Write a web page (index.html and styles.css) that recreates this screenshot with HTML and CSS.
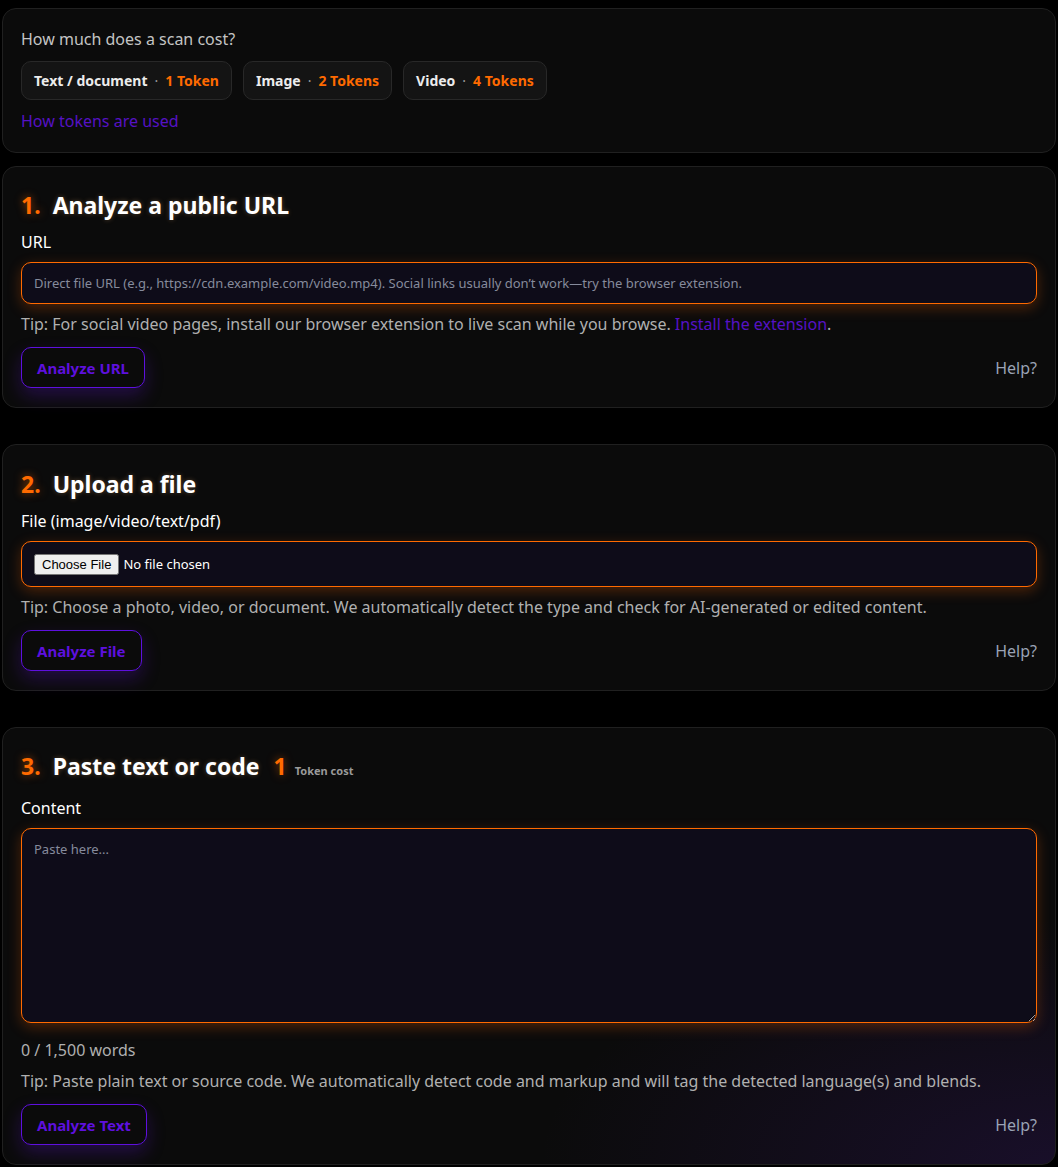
FILE: index.html
```html
<!DOCTYPE html>
<html lang="en">
<head>
<meta charset="utf-8">
<title>Scan</title>
<link rel="stylesheet" href="styles.css">
</head>
<body>
<main class="page">
  <section class="card card-cost">
    <p class="cost-title">How much does a scan cost?</p>
    <div class="chips">
      <span class="chip"><span class="chip-name">Text / document</span><span class="chip-dot">·</span><span class="chip-val">1 Token</span></span>
      <span class="chip"><span class="chip-name">Image</span><span class="chip-dot">·</span><span class="chip-val">2 Tokens</span></span>
      <span class="chip"><span class="chip-name">Video</span><span class="chip-dot">·</span><span class="chip-val">4 Tokens</span></span>
    </div>
    <a class="link cost-link" href="#">How tokens are used</a>
  </section>

  <section class="card card-step">
    <h2 class="step-title"><span class="step-num">1.</span> Analyze a public URL</h2>
    <label class="field-label" for="url">URL</label>
    <input class="field" id="url" type="text" placeholder="Direct file URL (e.g., https://cdn.example.com/video.mp4). Social links usually don’t work—try the browser extension.">
    <p class="tip">Tip: For social video pages, install our browser extension to live scan while you browse. <a class="link" href="#">Install the extension</a>.</p>
    <div class="actions">
      <button class="btn">Analyze URL</button>
      <a class="help" href="#">Help?</a>
    </div>
  </section>

  <section class="card card-step card-file">
    <h2 class="step-title"><span class="step-num">2.</span> Upload a file</h2>
    <label class="field-label" for="file">File (image/video/text/pdf)</label>
    <div class="field file-box"><input id="file" class="file-input" type="file"></div>
    <p class="tip">Tip: Choose a photo, video, or document. We automatically detect the type and check for AI-generated or edited content.</p>
    <div class="actions">
      <button class="btn">Analyze File</button>
      <a class="help" href="#">Help?</a>
    </div>
  </section>

  <section class="card card-step card-text">
    <h2 class="step-title"><span class="step-num">3.</span> Paste text or code <span class="cost-badge"><span class="cost-num">1</span><span class="cost-lbl">Token cost</span></span></h2>
    <label class="field-label label-content" for="content">Content</label>
    <textarea class="field area" id="content" placeholder="Paste here..."></textarea>
    <p class="count">0 / 1,500 words</p>
    <p class="tip tip-text">Tip: Paste plain text or source code. We automatically detect code and markup and will tag the detected language(s) and blends.</p>
    <div class="actions">
      <button class="btn">Analyze Text</button>
      <a class="help" href="#">Help?</a>
    </div>
  </section>
</main>
</body>
</html>
```

FILE: styles.css
```css
* { box-sizing: border-box; }

html, body {
  margin: 0;
  background: #000;
}

body {
  padding: 8px 2px 0;
  font-family: "Noto Sans", "Open Sans", sans-serif;
  font-size: 16px;
  line-height: 24px;
  color: #e8e8e8;
}

.page {
  display: flex;
  flex-direction: column;
}

.card {
  background: #0b0b0b;
  border: 1px solid #202020;
  border-radius: 14px;
  padding: 18px;
  display: flex;
  flex-direction: column;
}

.card-cost {
  margin-bottom: 13px;
  padding-bottom: 19px;
}

.card-step {
  margin-bottom: 36px;
  padding-bottom: 19px;
}

.card-file {
  padding-top: 19px;
}

.card-step:last-child {
  margin-bottom: 0;
}

.card-text {
  background:
    radial-gradient(ellipse 70% 80% at 100% 100%, rgba(60, 25, 120, 0.28), rgba(60, 25, 120, 0) 70%),
    #0b0b0b;
}

.cost-title {
  margin: 0;
  color: #c4c4c4;
}

.chips {
  display: flex;
  gap: 11px;
  margin-top: 10px;
}

.chip {
  display: inline-flex;
  align-items: center;
  height: 39px;
  padding: 0 12px;
  background: #141414;
  border: 1px solid #282828;
  border-radius: 10px;
  font-size: 14px;
  font-weight: 700;
}

.chip-name { color: #ececec; }
.chip-dot { color: #9a9a9a; margin: 0 7px; font-weight: 400; }
.chip-val { color: #ff6a00; }

.link {
  color: #5612c4;
  text-decoration: none;
}

.cost-link {
  margin-top: 9px;
  align-self: flex-start;
}

.step-title {
  margin: 4px 0 0;
  font-size: 23px;
  line-height: 32px;
  font-weight: 700;
  color: #fff;
  text-shadow: 0 0 5px rgba(255, 190, 120, 0.3);
  display: flex;
  align-items: baseline;
}

.step-num {
  color: #ff6a00;
  margin-right: 12px;
  text-shadow: 0 0 8px rgba(255, 106, 0, 0.6);
}

.cost-badge {
  display: inline-flex;
  align-items: baseline;
  margin-left: 14px;
}

.cost-num {
  color: #ff6a00;
  font-size: 23px;
  text-shadow: 0 0 8px rgba(255, 106, 0, 0.5);
}

.cost-lbl {
  color: #9a9a9a;
  font-size: 11px;
  margin-left: 8px;
  text-shadow: none;
}

.field-label {
  margin-top: 9px;
  color: #fff;
}

.label-content {
  margin-top: 9px;
}

.field {
  margin-top: 8px;
  width: 100%;
  background: #0e0c19;
  border: 1px solid #ff6a00;
  border-radius: 10px;
  box-shadow: 0 4px 14px rgba(255, 100, 0, 0.28);
  color: #ddd;
  font-family: inherit;
  outline: none;
}

input.field {
  height: 42px;
  padding: 0 12px;
  font-size: 13px;
}

.field::placeholder {
  color: #868b9c;
}

.file-box {
  height: 46px;
  padding: 0 12px;
  display: flex;
  align-items: center;
}

.file-input {
  color: #fff;
  font-family: "Noto Sans", sans-serif;
  font-size: 13px;
}

.area {
  height: 195px;
  padding: 10px 12px;
  font-size: 13px;
  line-height: 20px;
  resize: vertical;
  display: block;
}

.tip {
  margin: 8px 0 0;
  color: #b0b0b0;
}

.count {
  margin: 15px 0 0;
  color: #b0b0b0;
}

.tip-text {
  margin-top: 7px;
}

.actions {
  margin-top: 11px;
  display: flex;
  align-items: center;
  justify-content: space-between;
}

.btn {
  height: 41px;
  padding: 0 15px;
  background: transparent;
  border: 1px solid #5e10de;
  border-radius: 10px;
  color: #5e10de;
  font-family: inherit;
  font-size: 15px;
  font-weight: 700;
  box-shadow: 0 8px 18px rgba(90, 20, 200, 0.3);
}

.help {
  color: #9aa3b5;
  text-decoration: none;
}
```
